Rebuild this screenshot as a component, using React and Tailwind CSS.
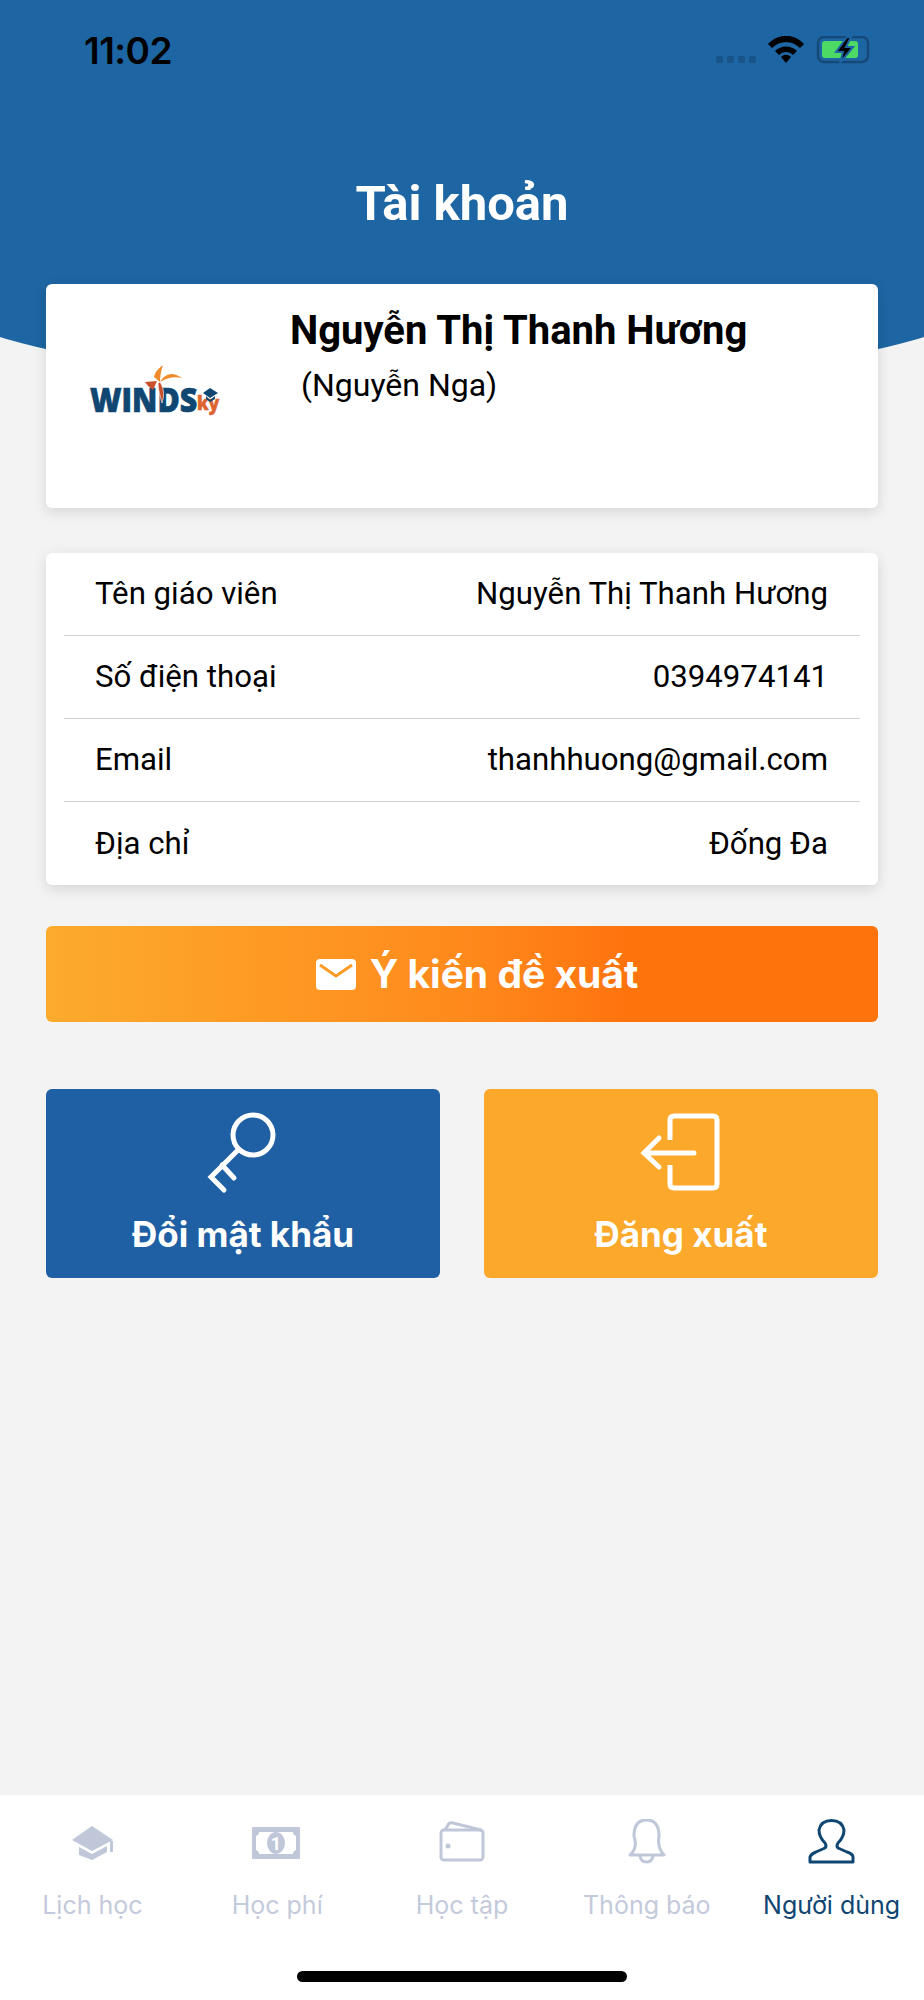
const rows = [
  ["Tên giáo viên", "Nguyễn Thị Thanh Hương"],
  ["Số điện thoại", "0394974141"],
  ["Email", "thanhhuong@gmail.com"],
  ["Địa chỉ", "Đống Đa"],
];

const StatusIcons = () => (
  <div className="flex items-end">
    <div className="flex gap-[4px] pb-[1px]">
      {[0, 1, 2, 3].map((i) => (
        <span key={i} className="block w-[7px] h-[7px] rounded-[2px] bg-[#17548a]" />
      ))}
    </div>
    <svg className="ml-[10px]" width="104" height="28" viewBox="766 37 104 28">
      <path d="M768 45 C778 34 794 34 804 45 L800 49 C792 41 780 41 772 49 Z" fill="#000" />
      <path d="M775 52 C781 46 791 46 797 52 L793 56 C789 52 783 52 779 56 Z" fill="#000" />
      <path d="M781 58 C784 55 788 55 791 58 L786 64 Z" fill="#000" />
      <rect x="818" y="38" width="50" height="25" rx="6" fill="none" stroke="#17487a" strokeWidth="2.5" />
      <path d="M871 46 C874 47 874 54 871 55 Z" fill="#17487a" />
      <rect x="822" y="42" width="36" height="17" rx="3" fill="#4cd964" />
      <path d="M847 38 L836 53 H843 L840 64 L853 48 H846 L851 38 Z" fill="#000" stroke="#1d66a3" strokeWidth="2" />
    </svg>
  </div>
);

const Logo = () => (
  <svg width="140" height="64" viewBox="85 358 140 64">
    <text transform="translate(90 412) scale(0.92 1)" fill="#0f4672" stroke="#0f4672" strokeWidth="0.7" fontFamily="'Open Sans', sans-serif" fontWeight="800" fontSize="33">WINDS</text>
    <text transform="translate(197 410) scale(0.88 1)" fill="#dd6430" stroke="#dd6430" strokeWidth="0.5" fontFamily="'Open Sans', sans-serif" fontWeight="800" fontSize="20">ky</text>
    <path d="M154 377 C155 372 159 368 163 365 C161 371 160 376 160 382 Z" fill="#f08a2c" />
    <path d="M160 382 C164 375 171 370 182 378 C174 376 167 378 160 382 Z" fill="#f08a2c" />
    <path d="M145 382 L157 381 L153 390 C150 388 147 385 145 382 Z" fill="#c9512e" />
    <path d="M160 382 C165 390 164 397 162 403 C160 396 158 389 158 383 Z" fill="#c9512e" stroke="#fff" strokeWidth="0.6" />
    <path d="M203 393 L210 388 L218 393 L210 398 Z" fill="#0f4672" />
    <path d="M206 396 L210 400 L215 396 V399 L210 402 L206 399 Z" fill="#0f4672" />
  </svg>
);

const TabItem = ({ label, active, children }) => (
  <div className="flex flex-col items-center">
    {children}
    <span className={`mt-[25px] text-[25px] leading-[30px] whitespace-nowrap font-['Inter',sans-serif] ${active ? "text-[#0f4672]" : "text-[#c3cadb]"}`}>
      {label}
    </span>
  </div>
);

export default function App() {
  return (
    <div className="relative w-[924px] h-[2000px] overflow-hidden bg-[#f3f3f3] flex flex-col font-['Roboto',sans-serif]">
      {/* Header curve */}
      <div className="absolute top-0 left-[-88px] w-[1100px] h-[386px] bg-[#1d66a3] [border-radius:0_0_50%_50%/0_0_107px_107px]"></div>

      <div className="relative flex justify-between items-end pt-[37px] pl-[84px] pr-[54px] h-[64px]">
        <span className="text-[37px] leading-[27px] font-semibold text-black font-['Inter',sans-serif] tracking-[-0.5px]">11:02</span>
        <StatusIcons />
      </div>

      <h1 className="relative mt-[116px] text-center text-white text-[49px] leading-[48px] font-bold">Tài khoản</h1>

      {/* Profile card */}
      <div className="relative mt-[56px] mx-[46px] h-[224px] bg-white rounded-[6px] shadow-[0_4px_14px_rgba(0,0,0,0.12)] flex">
        <div className="w-[244px] pl-[39px] pt-[74px] shrink-0">
          <Logo />
        </div>
        <div className="pt-[23px]">
          <div className="text-[40px] leading-[48px] font-bold text-black whitespace-nowrap">Nguyễn Thị Thanh Hương</div>
          <div className="mt-[10px] ml-[11px] text-[32px] leading-[40px] text-black">(Nguyễn Nga)</div>
        </div>
      </div>

      {/* Info list */}
      <div className="relative mt-[45px] mx-[46px] bg-white rounded-[6px] shadow-[0_4px_14px_rgba(0,0,0,0.12)] px-[18px]">
        {rows.map(([label, value], i) => (
          <div
            key={label}
            className={`h-[83px] flex items-center justify-between pt-[1px] pl-[31px] pr-[32px] text-[31.2px] text-black ${i < rows.length - 1 ? "border-b border-[#cfd2d6]" : ""}`}
          >
            <span>{label}</span>
            <span>{value}</span>
          </div>
        ))}
      </div>

      {/* Feedback button */}
      <div className="relative mt-[41px] mx-[46px] h-[96px] rounded-[6px] pl-[30px] bg-gradient-to-r from-[#fcab2c] via-[#ff8a1c] via-50% to-[#ff730d] to-70% flex items-center justify-center gap-[14px] text-white">
        <svg width="40" height="31" viewBox="0 0 40 31">
          <rect width="40" height="31" rx="4" fill="#fff" />
          <path d="M4 6 L20 17 L36 6" fill="none" stroke="#fd9a24" strokeWidth="3" />
        </svg>
        <span className="text-[39px] leading-[48px] font-bold font-['Inter',sans-serif]">Ý kiến đề xuất</span>
      </div>

      {/* Actions */}
      <div className="relative mt-[67px] mx-[46px] grid grid-cols-2 gap-[44px]">
        <div className="h-[189px] rounded-[6px] bg-[#1f5fa3] flex flex-col items-center pt-[21px] text-white">
          <svg width="100" height="84" viewBox="193 1110 100 84" fill="none" stroke="#fff" strokeWidth="5" strokeLinecap="round">
            <circle cx="253" cy="1135" r="20" />
            <path d="M238 1150 L211 1177 L224 1190 M222 1165 L234 1178" />
          </svg>
          <span className="mt-[18px] text-[35px] leading-[44px] font-bold font-['Inter',sans-serif]">Đổi mật khẩu</span>
        </div>
        <div className="h-[189px] rounded-[6px] bg-[#fca82b] flex flex-col items-center pt-[21px] text-white">
          <svg width="100" height="84" viewBox="631 1110 100 84" fill="none" stroke="#fff" strokeWidth="5" strokeLinecap="round">
            <path d="M670 1140 V1120 Q670 1116 674 1116 H713 Q717 1116 717 1120 V1184 Q717 1188 713 1188 H674 Q670 1188 670 1184 V1165" strokeLinecap="butt" />
            <path d="M694 1153 H645 M659 1138 L644 1153 L659 1167" />
          </svg>
          <span className="mt-[18px] text-[35px] leading-[44px] font-bold font-['Inter',sans-serif]">Đăng xuất</span>
        </div>
      </div>

      {/* Tab bar */}
      <div className="relative mt-auto h-[205px] bg-white">
        <div className="grid grid-cols-5 pt-[24px]">
          <TabItem label="Lịch học">
            <svg width="48" height="46" viewBox="68 1819 48 46" fill="#c0c7d8">
              <path d="M72 1840 L92 1826 L113 1840 L92 1851 Z" />
              <path d="M79 1847 L92 1854 L107 1846 V1852 L92 1860 L79 1855 Z" />
              <rect x="110" y="1841" width="3" height="11" />
            </svg>
          </TabItem>
          <TabItem label="Học phí">
            <svg width="56" height="46" viewBox="249 1819 56 46">
              <rect x="252" y="1827" width="48" height="32" rx="1" fill="#c0c7d8" />
              <path d="M259 1832 H293 Q293 1835 296 1836 V1850 Q293 1851 293 1854 H259 Q259 1851 256 1850 V1836 Q259 1835 259 1832 Z" fill="#fff" />
              <ellipse cx="276" cy="1843" rx="9" ry="11" fill="#c0c7d8" />
              <text x="276" y="1850" textAnchor="middle" fill="#fff" fontSize="18" fontWeight="700" fontFamily="'Roboto', sans-serif">1</text>
            </svg>
          </TabItem>
          <TabItem label="Học tập">
            <svg width="50" height="46" viewBox="437 1819 50 46" fill="none" stroke="#c0c7d8" strokeWidth="3">
              <rect x="441" y="1830" width="42" height="30" rx="3" />
              <path d="M445 1830 L448 1825 Q449 1822 453 1823 L481 1830" />
              <circle cx="448" cy="1846" r="2.500" fill="#c0c7d8" stroke="none" />
            </svg>
          </TabItem>
          <TabItem label="Thông báo">
            <svg width="44" height="46" viewBox="625 1819 44 46" fill="none" stroke="#c0c7d8" strokeWidth="3" strokeLinejoin="round">
              <path d="M630 1855 Q638 1848 634 1836 Q634 1820 646.500 1820 Q659 1820 659 1836 Q657 1848 664 1855 Z" />
              <path d="M640 1856 Q641 1862 646.500 1862 Q652 1862 653 1856" />
            </svg>
          </TabItem>
          <TabItem label="Người dùng" active>
            <svg width="50" height="46" viewBox="807 1819 50 46" fill="none" stroke="#0f4672" strokeWidth="3" strokeLinejoin="round">
              <path d="M810 1862 V1857 Q811 1854 816 1852 L825 1848 Q827 1846 825 1843 Q819 1837 819 1830 Q821 1820.500 831.500 1820.500 Q842 1820.500 844 1830 Q844 1837 838 1843 Q836 1846 838 1848 L847 1852 Q853 1854 853 1857 V1862 Z" />
            </svg>
          </TabItem>
        </div>
        <div className="absolute left-[297px] top-[176px] w-[330px] h-[11px] rounded-full bg-black"></div>
      </div>
    </div>
  );
}
